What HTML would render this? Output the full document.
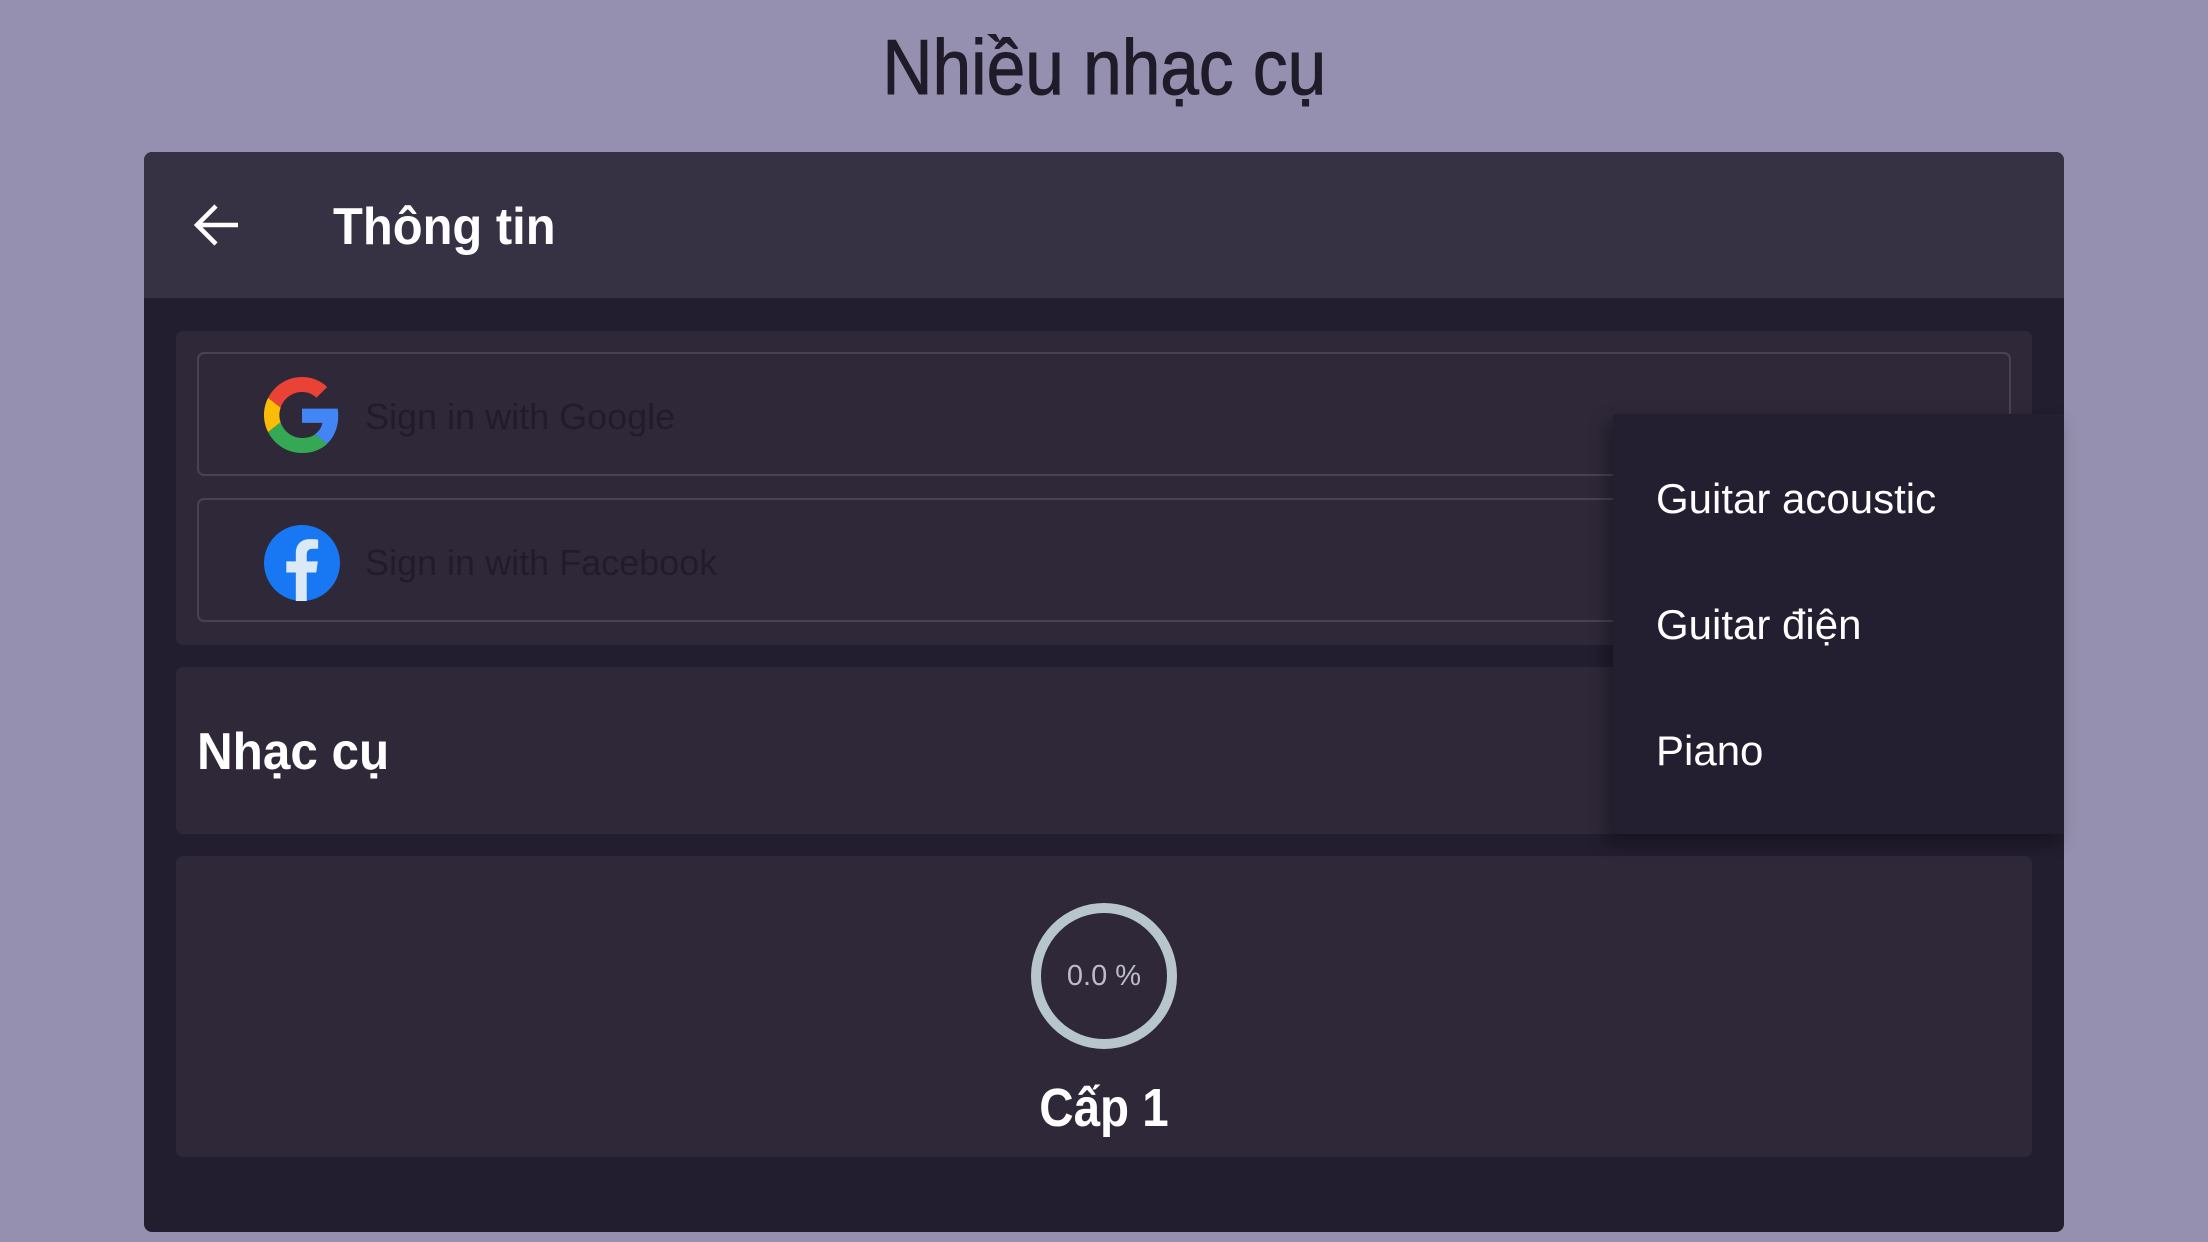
<!DOCTYPE html>
<html><head><meta charset="utf-8"><style>
*{margin:0;padding:0;box-sizing:border-box}
body{width:2208px;height:1242px;background:#9690b0;font-family:"Liberation Sans",sans-serif;position:relative;overflow:hidden}
.abs{position:absolute}
.title{left:0;width:2208px;top:22px;text-align:center;font-size:78px;color:#201b29;line-height:90px}
.title span{display:inline-block;transform:scaleX(.89);-webkit-text-stroke:1px #201b29}
.panel{left:144px;top:152px;width:1920px;height:1080px;background:#221d2f;border-radius:8px;overflow:hidden}
.header{left:0;top:0;width:1920px;height:146px;background:#373243}
.card{background:#2e2838;border-radius:7px}
.btn{border:2px solid #49434f;border-radius:7px}
.btxt{font-size:36px;color:#211c2a;white-space:nowrap}
.menu{left:1613px;top:414px;width:451px;height:420px;background:#231e30;box-shadow:-6px 8px 18px rgba(0,0,0,.35);border-radius:4px 0 0 4px}
.mi{left:1656px;font-size:42px;color:#fff;white-space:nowrap}
</style></head><body>
<div class="abs title"><span>Nhiều nhạc cụ</span></div>
<div class="abs panel">
 <div class="abs header"></div>
</div>
<svg class="abs" style="left:192px;top:202px" width="50" height="46" viewBox="0 0 50 46"><path d="M46 23H6M24 4L5 23l19 19" stroke="#fff" stroke-width="4.5" fill="none"/></svg>
<div class="abs" style="left:333px;top:197px;font-size:52px;font-weight:bold;color:#fff;transform:scaleX(.94);transform-origin:left">Thông tin</div>

<div class="abs card" style="left:176px;top:331px;width:1856px;height:314px"></div>
<div class="abs btn" style="left:197px;top:352px;width:1814px;height:124px"></div>
<div class="abs btn" style="left:197px;top:498px;width:1814px;height:124px"></div>
<svg class="abs" style="left:264px;top:377px" width="76" height="76" viewBox="0 0 48 48">
<path fill="#EA4335" d="M24 9.5c3.5 0 6.6 1.2 9.1 3.6l6.8-6.8C35.8 2.4 30.3 0 24 0 14.6 0 6.6 5.4 2.6 13.2l7.9 6.2C12.4 13.7 17.7 9.5 24 9.5z"/>
<path fill="#4285F4" d="M46.9 24.5c0-1.6-.1-3.1-.4-4.5H24v9h12.9c-.6 3-2.3 5.5-4.8 7.2l7.7 6c4.5-4.2 7.1-10.3 7.1-17.7z"/>
<path fill="#FBBC05" d="M10.5 28.6c-.5-1.4-.8-3-.8-4.6s.3-3.2.8-4.6l-7.9-6.2C.9 16.5 0 20.1 0 24s.9 7.5 2.6 10.8l7.9-6.2z"/>
<path fill="#34A853" d="M24 48c6.5 0 11.9-2.1 15.9-5.8l-7.7-6c-2.2 1.5-5 2.3-8.2 2.3-6.3 0-11.6-4.2-13.5-9.9l-7.9 6.2C6.6 42.6 14.6 48 24 48z"/>
</svg>
<div class="abs btxt" style="left:365px;top:396px">Sign in with Google</div>
<svg class="abs" style="left:264px;top:525px" width="76" height="76" viewBox="0 0 48 48">
<circle cx="24" cy="24" r="24" fill="#1877F2"/>
<path fill="#dbe8f5" d="M27 48V30h6l1-7h-7v-4.5c0-2 1-3.5 4-3.5h3.2V9.2c-.6-.1-2.8-.3-5.3-.3-5.3 0-8.8 3.2-8.8 9V23h-6v7h6v18z"/>
</svg>
<div class="abs btxt" style="left:365px;top:542px">Sign in with Facebook</div>

<div class="abs card" style="left:176px;top:667px;width:1856px;height:167px"></div>
<div class="abs" style="left:197px;top:722px;font-size:52px;font-weight:bold;color:#fff;transform:scaleX(.95);transform-origin:left">Nhạc cụ</div>

<div class="abs card" style="left:176px;top:856px;width:1856px;height:301px"></div>
<svg class="abs" style="left:1027px;top:899px" width="154" height="154"><circle cx="77" cy="77" r="68" stroke="#b6c6ca" stroke-width="10" fill="none"/></svg>
<div class="abs" style="left:1027px;top:960px;width:154px;text-align:center;font-size:29px;color:#bdbcc6">0.0 %</div>
<div class="abs" style="left:954px;top:1077px;width:300px;text-align:center;font-size:54px;font-weight:bold;color:#fff;transform:scaleX(.88)">Cấp 1</div>

<div class="abs menu"></div>
<div class="abs mi" style="top:475px">Guitar acoustic</div>
<div class="abs mi" style="top:601px">Guitar điện</div>
<div class="abs mi" style="top:727px">Piano</div>
</body></html>
